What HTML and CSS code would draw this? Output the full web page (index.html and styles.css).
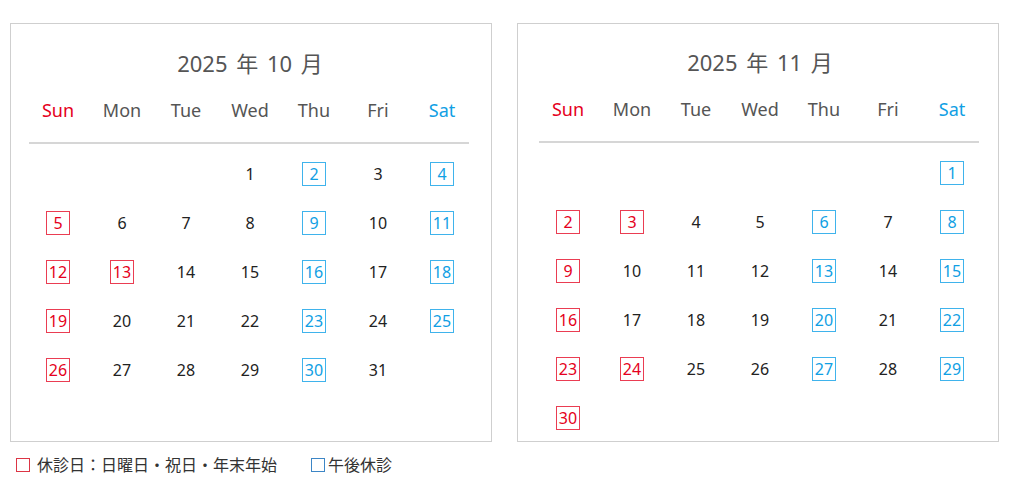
FILE: index.html
```html
<!DOCTYPE html>
<html lang="ja">
<head>
<meta charset="utf-8">
<title>診療カレンダー</title>
<link rel="stylesheet" href="styles.css">
</head>
<body>
<div class="page">
  <div class="cals">
    <section class="cal">
      <h2 class="cal-title">2025 年 10 月</h2>
      <div class="week">
        <span class="sun">Sun</span><span>Mon</span><span>Tue</span><span>Wed</span><span>Thu</span><span>Fri</span><span class="sat">Sat</span>
      </div>
      <div class="rule"></div>
      <div class="days">
        <span></span><span></span><span></span><span><i>1</i></span><span><i class="pm">2</i></span><span><i>3</i></span><span><i class="pm">4</i></span>
        <span><i class="off">5</i></span><span><i>6</i></span><span><i>7</i></span><span><i>8</i></span><span><i class="pm">9</i></span><span><i>10</i></span><span><i class="pm">11</i></span>
        <span><i class="off">12</i></span><span><i class="off">13</i></span><span><i>14</i></span><span><i>15</i></span><span><i class="pm">16</i></span><span><i>17</i></span><span><i class="pm">18</i></span>
        <span><i class="off">19</i></span><span><i>20</i></span><span><i>21</i></span><span><i>22</i></span><span><i class="pm">23</i></span><span><i>24</i></span><span><i class="pm">25</i></span>
        <span><i class="off">26</i></span><span><i>27</i></span><span><i>28</i></span><span><i>29</i></span><span><i class="pm">30</i></span><span><i>31</i></span><span></span>
      </div>
    </section>
    <section class="cal cal-alt">
      <h2 class="cal-title">2025 年 11 月</h2>
      <div class="week">
        <span class="sun">Sun</span><span>Mon</span><span>Tue</span><span>Wed</span><span>Thu</span><span>Fri</span><span class="sat">Sat</span>
      </div>
      <div class="rule"></div>
      <div class="days">
        <span></span><span></span><span></span><span></span><span></span><span></span><span><i class="pm">1</i></span>
        <span><i class="off">2</i></span><span><i class="off">3</i></span><span><i>4</i></span><span><i>5</i></span><span><i class="pm">6</i></span><span><i>7</i></span><span><i class="pm">8</i></span>
        <span><i class="off">9</i></span><span><i>10</i></span><span><i>11</i></span><span><i>12</i></span><span><i class="pm">13</i></span><span><i>14</i></span><span><i class="pm">15</i></span>
        <span><i class="off">16</i></span><span><i>17</i></span><span><i>18</i></span><span><i>19</i></span><span><i class="pm">20</i></span><span><i>21</i></span><span><i class="pm">22</i></span>
        <span><i class="off">23</i></span><span><i class="off">24</i></span><span><i>25</i></span><span><i>26</i></span><span><i class="pm">27</i></span><span><i>28</i></span><span><i class="pm">29</i></span>
        <span><i class="off">30</i></span><span></span><span></span><span></span><span></span><span></span><span></span>
      </div>
    </section>
  </div>
  <div class="legend">
    <span class="legend-item legend-off"><b class="swatch swatch-off"></b>休診日：日曜日・祝日・年末年始</span>
    <span class="legend-item legend-pm"><b class="swatch swatch-pm"></b>午後休診</span>
  </div>
</div>
</body>
</html>
```

FILE: styles.css
```css
* { box-sizing: border-box; }

body {
  margin: 0;
  background: #fff;
  font-family: "Noto Sans", "Noto Sans CJK JP", sans-serif;
  color: #222;
}

.page {
  padding: 23px 0 0 10px;
}

.cals {
  display: flex;
  gap: 25px;
  align-items: stretch;
}

.cal {
  width: 482px;
  border: 1px solid #cfcfcf;
  padding: 23px 17px 10px 15px;
}

.cal-alt {
  padding: 22px 14px 11px 18px;
}

.cal-title {
  margin: 0;
  font-size: 22px;
  font-weight: 400;
  line-height: 32px;
  text-align: center;
  color: #555;
  word-spacing: 3px;
}

.week {
  display: grid;
  grid-template-columns: repeat(7, 64px);
  margin-top: 16px;
  font-size: 18px;
  line-height: 30px;
  color: #555;
  text-align: center;
}

.week .sun { color: #e50020; }
.week .sat { color: #10a0e4; }

.rule {
  width: 440px;
  height: 2px;
  margin: 17px 0 0 3px;
  background: #d6d6d6;
}

.days {
  display: grid;
  grid-template-columns: repeat(7, 64px);
  grid-auto-rows: 24px;
  row-gap: 25px;
  margin-top: 18px;
  font-size: 16px;
  text-align: center;
}

.days span {
  display: flex;
  justify-content: center;
}

.days i {
  font-style: normal;
  display: block;
  min-width: 24px;
  height: 24px;
  line-height: 24px;
  color: #222;
}

.days i.off,
.days i.pm {
  border: 1px solid;
  line-height: 22px;
  padding: 0 1px;
}

.days i.off {
  color: #e50020;
  border-color: #ea3d52;
}

.days i.pm {
  color: #10a0e4;
  border-color: #3fb3ec;
}

.legend {
  display: flex;
  margin-top: 13px;
  padding-left: 6px;
  font-size: 16px;
  line-height: 20px;
  color: #333;
}

.legend-item {
  display: flex;
  align-items: center;
}

.swatch {
  display: block;
  width: 14px;
  height: 14px;
  border: 1px solid;
}

.swatch-off {
  border-color: #dc3545;
  margin-right: 7px;
}

.swatch-pm {
  border-color: #3d86c6;
  margin-right: 3px;
}

.legend-pm {
  margin-left: 34px;
}
```
